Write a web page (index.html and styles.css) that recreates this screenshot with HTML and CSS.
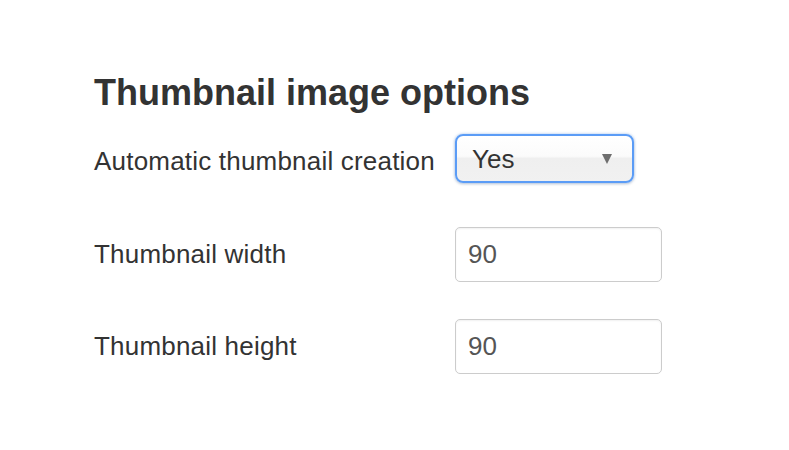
FILE: index.html
```html
<!DOCTYPE html>
<html lang="en">
<head>
    <meta charset="UTF-8">
    <meta name="viewport" content="width=device-width, initial-scale=1.0">
    <title>Thumbnail image options</title>
    <link rel="stylesheet" href="styles.css">
</head>
<body>
    <div class="panel">
        <h2 class="panel-title">Thumbnail image options</h2>

        <form class="options-form">
            <div class="form-row form-row-select">
                <label for="auto_thumb">Automatic thumbnail creation</label>
                <div class="select-wrap">
                    <select id="auto_thumb" name="auto_thumb">
                        <option value="1" selected>Yes</option>
                        <option value="0">No</option>
                    </select>
                </div>
            </div>

            <div class="form-row">
                <label for="thumb_width">Thumbnail width</label>
                <input type="text" id="thumb_width" name="thumb_width" value="90">
            </div>

            <div class="form-row">
                <label for="thumb_height">Thumbnail height</label>
                <input type="text" id="thumb_height" name="thumb_height" value="90">
            </div>
        </form>
    </div>
</body>
</html>
```

FILE: styles.css
```css
body {
    margin: 0;
    background: #fff;
    font-family: "Liberation Sans", Arial, sans-serif;
    color: #333;
}

.panel {
    padding: 71px 0 0 94px;
}

.panel-title {
    margin: 0 0 20px;
    font-size: 36px;
    line-height: 1.2;
    font-weight: bold;
    color: #333;
}

/* Form satirlari */
.form-row {
    display: flex;
    align-items: center;
    min-height: 55px;
    margin-bottom: 37px;
}

.form-row-select {
    margin-bottom: 38px;
}

.form-row label {
    width: 361px;
    font-size: 26px;
    letter-spacing: 0.2px;
    color: #333;
}

.form-row input {
    box-sizing: border-box;
    width: 207px;
    height: 55px;
    margin: 0;
    padding: 0 12px;
    border: 1px solid #cccccc;
    border-radius: 5px;
    box-shadow: inset 0 1px 2px rgba(0, 0, 0, 0.06);
    font-family: inherit;
    font-size: 26px;
    color: #555;
    background: #fff;
}

.select-wrap {
    position: relative;
    align-self: flex-start;
}

.select-wrap select {
    -webkit-appearance: none;
    appearance: none;
    box-sizing: border-box;
    width: 179px;
    height: 49px;
    margin: 0;
    padding: 0 40px 0 15px;
    border: 2px solid #5b9cf6;
    border-radius: 8px;
    box-shadow: 0 0 3px rgba(90, 155, 242, 0.5), 0 1px 3px rgba(0, 0, 0, 0.18);
    background: linear-gradient(#ffffff 0%, #fbfbfb 45%, #efefef 50%, #f1f1f1 100%);
    font-family: inherit;
    font-size: 26px;
    color: #333;
    outline: none;
}

/* Ok isareti */
.select-wrap::after {
    content: "";
    position: absolute;
    left: 147px;
    top: 20px;
    border-left: 5.5px solid transparent;
    border-right: 5.5px solid transparent;
    border-top: 10px solid #6e6e6e;
    pointer-events: none;
}
```
